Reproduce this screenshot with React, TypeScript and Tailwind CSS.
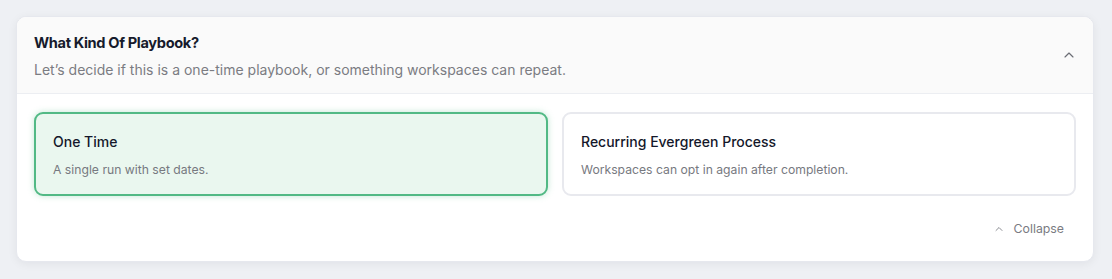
import { ChevronUp } from 'lucide-react';

const options = [
  { title: 'One Time', desc: 'A single run with set dates.', selected: true },
  { title: 'Recurring Evergreen Process', desc: 'Workspaces can opt in again after completion.', selected: false },
];

export default function App() {
  return (
    <div className="min-h-[279px] w-full bg-[#eef0f4] pt-4 pl-4 pr-[18px] pb-[16px] font-['Inter',sans-serif]">
      <section className="overflow-hidden rounded-[10px] border border-[#e6e8ee] bg-white shadow-[0_2px_10px_rgba(20,24,40,0.06)]">
        {/* Header */}
        <header className="flex h-[77px] items-center justify-between border-b border-[#eceef2] bg-[#fafafa] pl-[17px] pr-[16px]">
          <div className="pt-[2px]">
            <h2 className="text-[14.6px] font-bold leading-5 tracking-[-0.35px] text-[#161a2c]">What Kind Of Playbook?</h2>
            <p className="mt-[7px] text-[14px] leading-5 text-[#7b7c82]">
              Let’s decide if this is a one-time playbook, or something workspaces can repeat.
            </p>
          </div>
          <ChevronUp className="h-4 w-4 text-[#6b6d75]" strokeWidth={1.75} />
        </header>

        {/* Options */}
        <div className="px-[17px] pt-[18px]">
          <div className="grid grid-cols-2 gap-[14px]">
            {options.map((o) => (
              <div
                key={o.title}
                className={
                  o.selected
                    ? 'h-[84px] rounded-[9px] border-2 border-[#52b985] bg-[#eaf7ef] px-[17px] pt-[18px] shadow-[0_0_6px_rgba(82,185,133,0.35)]'
                    : 'h-[84px] rounded-[9px] border-2 border-[#e8e9ee] bg-white px-[17px] pt-[18px]'
                }
              >
                <p className="text-[14px] font-medium leading-5 text-[#14172a]">{o.title}</p>
                <p className="mt-[8px] text-[12.2px] leading-5 text-[#777980]">{o.desc}</p>
              </div>
            ))}
          </div>
          <div className="flex justify-end pb-[22px] pt-[23px] pr-[12px]">
            <button className="flex items-center gap-[9px] text-[12.3px] leading-5 text-[#7a7b82]">
              <ChevronUp className="h-3 w-3" strokeWidth={1.75} />
              Collapse
            </button>
          </div>
        </div>
      </section>
    </div>
  );
}
